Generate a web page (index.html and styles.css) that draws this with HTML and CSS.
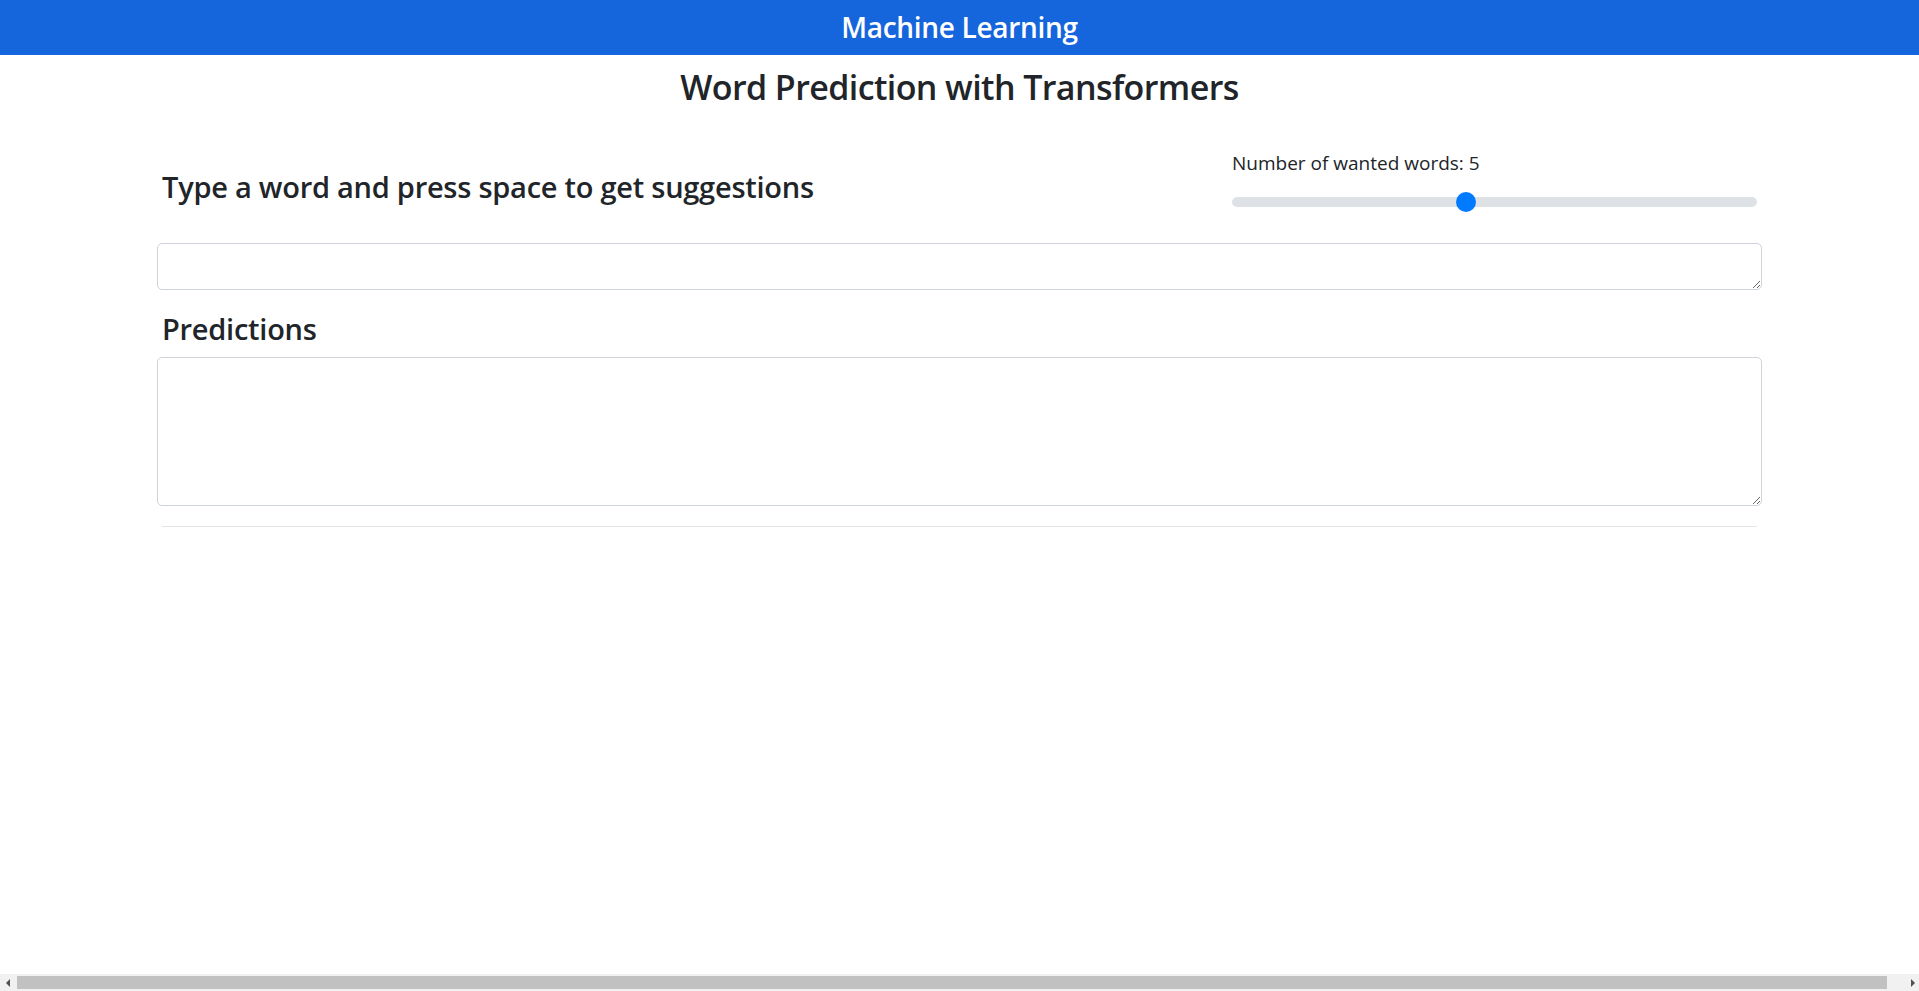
FILE: index.html
```html
<!DOCTYPE html>
<html lang="en">
<head>
<meta charset="utf-8">
<title>Word Prediction with Transformers</title>
<link rel="stylesheet" href="styles.css">
</head>
<body>
<header class="topbar">
  <h2 class="topbar-title">Machine Learning</h2>
</header>
<main class="container">
  <h1 class="page-title">Word Prediction with Transformers</h1>
  <div class="input-row">
    <h3 class="section-title prompt">Type a word and press space to get suggestions</h3>
    <div class="slider-block">
      <label class="slider-label" for="nwords">Number of wanted words: 5</label>
      <input class="range" id="nwords" type="range" min="1" max="10" value="5">
    </div>
  </div>
  <textarea class="field field-input" rows="1"></textarea>
  <h3 class="section-title predictions">Predictions</h3>
  <textarea class="field field-output" rows="5"></textarea>
  <hr class="divider">
</main>
<div class="fake-scrollbar" aria-hidden="true">
  <span class="sb-arrow sb-left"></span>
  <span class="sb-thumb"></span>
  <span class="sb-arrow sb-right"></span>
</div>
</body>
</html>
```

FILE: styles.css
```css
* { box-sizing: border-box; }

html, body {
  margin: 0;
  padding: 0;
  background: #ffffff;
}

body {
  font-family: "Open Sans", "Noto Sans", Arial, sans-serif;
  color: #212529;
  font-size: 16px;
  line-height: 1.5;
}

.topbar {
  height: 55px;
  background: #1565dc;
  display: flex;
  align-items: center;
  justify-content: center;
}

.topbar-title {
  margin: 0;
  color: #ffffff;
  font-size: 28px;
  font-weight: 600;
  line-height: 1.2;
  letter-spacing: -0.3px;
}

.container {
  width: 1595px;
  margin: 0 auto;
  display: flex;
  flex-direction: column;
}

.page-title {
  margin: 8px 0 0;
  text-align: center;
  font-size: 34px;
  font-weight: 600;
  line-height: 48px;
  letter-spacing: -0.6px;
}

.input-row {
  margin-top: 37px;
  display: flex;
  justify-content: space-between;
  align-items: flex-start;
}

.section-title {
  margin: 0;
  font-size: 29px;
  font-weight: 600;
  line-height: 36px;
  letter-spacing: -0.25px;
}

.prompt {
  margin-top: 21px;
}

.slider-block {
  width: 525px;
  display: flex;
  flex-direction: column;
}

.slider-label {
  font-size: 19px;
  line-height: 30px;
}

.range {
  -webkit-appearance: none;
  appearance: none;
  width: 525px;
  height: 20px;
  margin: 14px 0 0;
  padding: 0;
  background: transparent;
}

.range::-webkit-slider-runnable-track {
  height: 10px;
  border-radius: 5px;
  background: #dee2e6;
}

.range::-webkit-slider-thumb {
  -webkit-appearance: none;
  appearance: none;
  width: 20px;
  height: 20px;
  margin-top: -5px;
  border: 0;
  border-radius: 50%;
  background: #007bff;
}

.field {
  display: block;
  width: calc(100% + 10px);
  margin-left: -5px;
  margin-right: -5px;
  border: 1px solid #ced4da;
  border-radius: 5px;
  padding: 8px 12px;
  font-family: inherit;
  font-size: 16px;
  color: #495057;
  background: #ffffff;
}

.field-input {
  margin-top: 31px;
  height: 47px;
}

.predictions {
  margin-top: 21px;
}

.field-output {
  margin-top: 10px;
  height: 149px;
}

.divider {
  width: 100%;
  margin: 20px 0 0;
  border: 0;
  border-top: 1px solid rgba(0, 0, 0, 0.1);
}

.fake-scrollbar {
  position: fixed;
  left: 0;
  right: 0;
  bottom: 0;
  height: 17px;
  background: #f1f1f1;
  display: flex;
  align-items: center;
  padding: 0 4px 0 6px;
}

.sb-thumb {
  flex: 1;
  height: 13px;
  margin: 0 24px 0 7px;
  background: #c1c1c1;
}

.sb-arrow {
  width: 0;
  height: 0;
  border-top: 4px solid transparent;
  border-bottom: 4px solid transparent;
}

.sb-left {
  border-right: 4px solid #505050;
}

.sb-right {
  border-left: 4px solid #505050;
}
```
